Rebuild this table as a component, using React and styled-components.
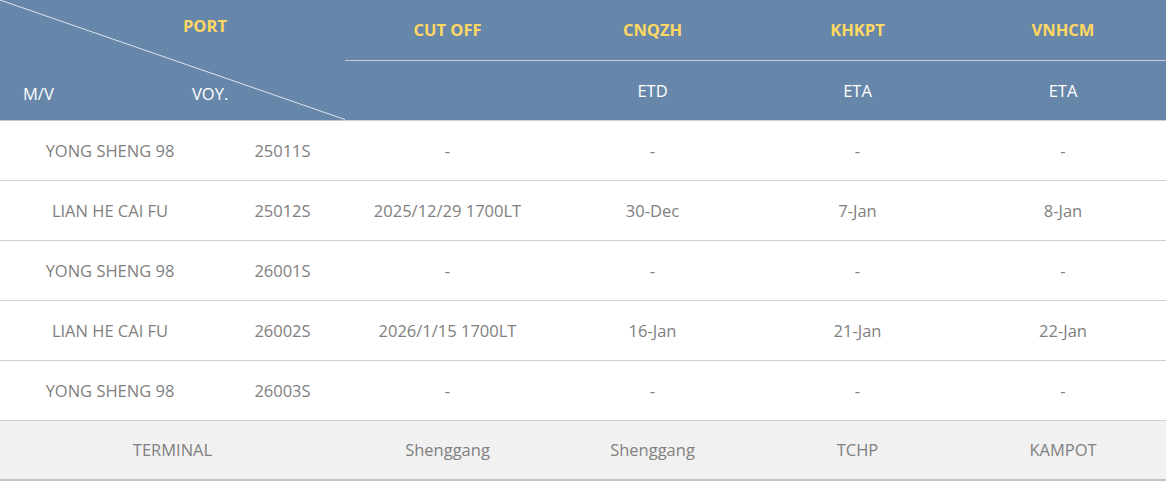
import React from 'react';
import styled, { createGlobalStyle } from 'styled-components';

const GlobalStyle = createGlobalStyle`
  html, body {
    margin: 0;
    padding: 0;
    background: #fff;
  }
  body {
    font-family: "Open Sans", "Noto Sans", sans-serif;
  }
`;

const Table = styled.table`
  width: 1166px;
  border-collapse: collapse;
  table-layout: fixed;
  font-size: 16.5px;
  color: #808080;
`;

const HeadRow = styled.tr`
  height: 60px;
  background: #6787aa;
`;

const HeadCell = styled.th`
  font-weight: ${(p) => (p.$port ? 700 : 400)};
  color: ${(p) => (p.$port ? '#ffd862' : '#fff')};
  text-align: center;
  vertical-align: middle;
  padding: 0;
  border-bottom: ${(p) => (p.$split ? '1px solid #c9ced6' : 'none')};
`;

const CornerCell = styled.th`
  position: relative;
  padding: 0;
  font-weight: 400;
  border-bottom: 1px solid #c8c8c8;
`;

const Diagonal = styled.svg`
  position: absolute;
  inset: 0;
  width: 100%;
  height: 100%;
`;

const CornerLabel = styled.span`
  position: absolute;
  top: ${(p) => p.$top}px;
  left: ${(p) => p.$left}px;
  color: ${(p) => (p.$port ? '#ffd862' : '#fff')};
  font-weight: ${(p) => (p.$port ? 700 : 400)};
  line-height: 20px;
`;

const Row = styled.tr`
  height: 60px;
  background: ${(p) => (p.$footer ? '#f1f1f1' : '#fff')};
  border-top: 1px solid #cfcfcf;
  border-bottom: ${(p) => (p.$footer ? '2px solid #c4c4c4' : '1px solid #cfcfcf')};
`;

const Cell = styled.td`
  text-align: center;
  vertical-align: middle;
  padding: 0;
  white-space: nowrap;
`;

const ports = ['CUT OFF', 'CNQZH', 'KHKPT', 'VNHCM'];
const kinds = ['', 'ETD', 'ETA', 'ETA'];

const rows = [
  ['YONG SHENG 98', '25011S', '-', '-', '-', '-'],
  ['LIAN HE CAI FU', '25012S', '2025/12/29 1700LT', '30-Dec', '7-Jan', '8-Jan'],
  ['YONG SHENG 98', '26001S', '-', '-', '-', '-'],
  ['LIAN HE CAI FU', '26002S', '2026/1/15 1700LT', '16-Jan', '21-Jan', '22-Jan'],
  ['YONG SHENG 98', '26003S', '-', '-', '-', '-'],
];

const terminals = ['Shenggang', 'Shenggang', 'TCHP', 'KAMPOT'];

const App = () => (
  <>
    <GlobalStyle />
    <Table>
      <colgroup>
        <col style={{ width: 220 }} />
        <col style={{ width: 125 }} />
        <col style={{ width: 205 }} />
        <col style={{ width: 205 }} />
        <col style={{ width: 205 }} />
        <col style={{ width: 206 }} />
      </colgroup>
      <thead>
        <HeadRow>
          <CornerCell colSpan={2} rowSpan={2}>
            <Diagonal viewBox="0 0 345 120" preserveAspectRatio="none">
              <line x1="0" y1="0" x2="345" y2="120" stroke="#dfe4ea" strokeWidth="1" />
            </Diagonal>
            <CornerLabel $port $top={16} $left={183}>PORT</CornerLabel>
            <CornerLabel $top={84} $left={23}>M/V</CornerLabel>
            <CornerLabel $top={84} $left={192}>VOY.</CornerLabel>
          </CornerCell>
          {ports.map((p) => (
            <HeadCell key={p} $port $split>{p}</HeadCell>
          ))}
        </HeadRow>
        <HeadRow>
          {kinds.map((k, i) => (
            <HeadCell key={i}>{k}</HeadCell>
          ))}
        </HeadRow>
      </thead>
      <tbody>
        {rows.map((r, i) => (
          <Row key={i}>
            {r.map((v, j) => (
              <Cell key={j}>{v}</Cell>
            ))}
          </Row>
        ))}
        <Row $footer>
          <Cell colSpan={2}>TERMINAL</Cell>
          {terminals.map((t, i) => (
            <Cell key={i}>{t}</Cell>
          ))}
        </Row>
      </tbody>
    </Table>
  </>
);

export default App;
